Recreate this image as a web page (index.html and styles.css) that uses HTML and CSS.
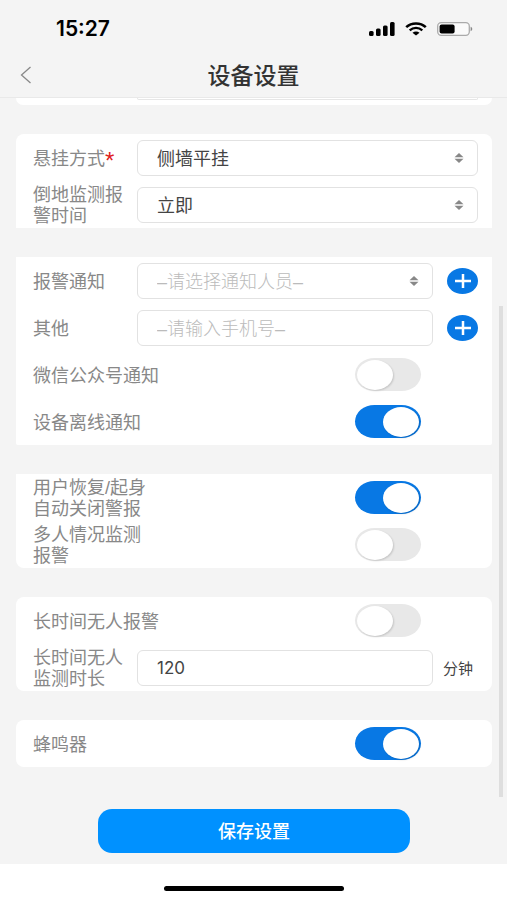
FILE: index.html
```html
<!DOCTYPE html>
<html lang="zh-CN">
<head>
<meta charset="utf-8">
<meta name="viewport" content="width=device-width, initial-scale=1">
<title>设备设置</title>
<link rel="stylesheet" href="styles.css">
</head>
<body>
<header class="top">
  <div class="status">
    <span class="time">15:27</span>
    <div class="status-icons">
      <svg width="26" height="14" viewBox="0 0 26 14" aria-hidden="true">
        <rect x="0" y="9" width="4.6" height="5" rx="1.5"/>
        <rect x="7" y="6.5" width="4.6" height="7.5" rx="1.5"/>
        <rect x="14" y="3.5" width="4.6" height="10.5" rx="1.5"/>
        <rect x="21" y="0" width="4.6" height="14" rx="1.5"/>
      </svg>
      <svg width="22" height="14" viewBox="0 0 22 14" aria-hidden="true">
        <path d="M1.2 5.2C6.6.1 15.4.1 20.8 5.2" fill="none" stroke="#000" stroke-width="2.5"/>
        <path d="M4.7 8.3C8.3 5.1 13.700 5.1 17.3 8.3" fill="none" stroke="#000" stroke-width="2.3"/>
        <path d="M7.5 10.7C9.5 9 12.5 9 14.5 10.7L11 13.6Z"/>
      </svg>
      <svg width="36" height="14" viewBox="0 0 36 14" aria-hidden="true">
        <rect x=".7" y=".7" width="31.6" height="12.6" rx="3.5" fill="#fff" fill-opacity=".5" stroke="#aaa" stroke-width="1.3"/>
        <rect x="2.6" y="2.5" width="15" height="9" rx="2"/>
        <path d="M33.6 4.8C35.8 5.5 35.8 8.5 33.6 9.2Z" fill="#888"/>
      </svg>
    </div>
  </div>
  <div class="nav">
    <button class="back" type="button" aria-label="返回">
      <svg width="12" height="18" viewBox="0 0 12 18" aria-hidden="true"><path d="M10.5 1L1.5 9L10.5 17" fill="none" stroke="#888" stroke-width="1.3"/></svg>
    </button>
    <h1>设备设置</h1>
  </div>
</header>

<main>
  <form class="settings">
    <section class="card card-cut"><div class="cut-field"></div></section>

    <section class="card flat-bottom">
      <div class="row">
        <label for="mount">悬挂方式<span class="req">*</span></label>
        <div class="field">
          <select id="mount"><option>侧墙平挂</option></select>
          <svg class="arrows" viewBox="0 0 10 10" aria-hidden="true"><path d="M5 0L9.5 4.2H.5Z"/><path d="M.5 5.8H9.5L5 10Z"/></svg>
        </div>
      </div>
      <div class="row">
        <label for="fall">倒地监测报警时间</label>
        <div class="field">
          <select id="fall"><option>立即</option></select>
          <svg class="arrows" viewBox="0 0 10 10" aria-hidden="true"><path d="M5 0L9.5 4.2H.5Z"/><path d="M.5 5.8H9.5L5 10Z"/></svg>
        </div>
      </div>
    </section>

    <section class="card flat">
      <div class="row">
        <label for="notify">报警通知</label>
        <div class="field">
          <select id="notify" class="empty"><option>–请选择通知人员–</option></select>
          <svg class="arrows" viewBox="0 0 10 10" aria-hidden="true"><path d="M5 0L9.5 4.2H.5Z"/><path d="M.5 5.8H9.5L5 10Z"/></svg>
        </div>
        <div class="side">
          <button class="add" type="button" aria-label="添加通知人员"><svg width="16" height="14" viewBox="0 0 16 14" aria-hidden="true"><path d="M0 7H16M8 0V14" stroke="#fff" stroke-width="2.5"/></svg></button>
        </div>
      </div>
      <div class="row">
        <label for="other">其他</label>
        <div class="field"><input id="other" class="text" type="tel" placeholder="–请输入手机号–"></div>
        <div class="side">
          <button class="add" type="button" aria-label="添加手机号"><svg width="16" height="14" viewBox="0 0 16 14" aria-hidden="true"><path d="M0 7H16M8 0V14" stroke="#fff" stroke-width="2.5"/></svg></button>
        </div>
      </div>
      <div class="row switch-row">
        <label for="wechat">微信公众号通知</label>
        <input id="wechat" class="switch" type="checkbox">
      </div>
      <div class="row switch-row">
        <label for="offline">设备离线通知</label>
        <input id="offline" class="switch" type="checkbox" checked>
      </div>
    </section>

    <section class="card flat-top">
      <div class="row switch-row">
        <label for="recover">用户恢复/起身<br>自动关闭警报</label>
        <input id="recover" class="switch" type="checkbox" checked>
      </div>
      <div class="row switch-row">
        <label for="multi">多人情况监测<br>报警</label>
        <input id="multi" class="switch" type="checkbox">
      </div>
    </section>

    <section class="card">
      <div class="row switch-row">
        <label for="absent">长时间无人报警</label>
        <input id="absent" class="switch" type="checkbox">
      </div>
      <div class="row">
        <label for="duration">长时间无人监测时长</label>
        <div class="field"><input id="duration" class="text number" type="text" inputmode="numeric" value="120"></div>
        <div class="side unit">分钟</div>
      </div>
    </section>

    <section class="card">
      <div class="row switch-row">
        <label for="buzzer">蜂鸣器</label>
        <input id="buzzer" class="switch" type="checkbox" checked>
      </div>
    </section>

    <button class="save" type="submit">保存设置</button>
  </form>
  <div class="scrollbar"></div>
</main>

<footer class="home"><div class="home-bar"></div></footer>
</body>
</html>
```

FILE: styles.css
```css
* {
  box-sizing: border-box;
}

body {
  margin: 0;
  min-height: 100vh;
  display: flex;
  flex-direction: column;
  background: #f4f4f4;
  color: #444;
  font: 18px/21px "Liberation Sans", "Noto Sans CJK SC", sans-serif;
}

button,
input,
select {
  font: inherit;
  color: inherit;
  margin: 0;
}

button {
  border: 0;
  padding: 0;
}

.top {
  border-bottom: 1px solid #e9e9e9;
}

.status {
  display: flex;
  justify-content: space-between;
  align-items: center;
  height: 52px;
  padding: 5px 34px 0 56px;
}

.time {
  font: 600 21px/24px Inter, sans-serif;
  color: #000;
}

.status-icons {
  display: flex;
  gap: 10px;
}

.nav {
  display: grid;
  grid-template-columns: 52px 1fr 52px;
  align-items: center;
  height: 45px;
}

.back {
  display: flex;
  padding-left: 20px;
  background: none;
}

h1 {
  margin: 0;
  padding-top: 2px;
  text-align: center;
  font-size: 23px;
  line-height: 28px;
  font-weight: 500;
  color: #333;
}

main {
  position: relative;
  flex: 1;
}

.settings {
  display: flex;
  flex-direction: column;
  gap: 29px;
  padding: 0 15px 10px 16px;
}

.card {
  background: #fff;
  border-radius: 8px;
}

.flat-bottom {
  border-radius: 8px 8px 0 0;
}

.flat {
  border-radius: 0 0 2px 2px;
}

.flat-top {
  border-radius: 0 0 8px 8px;
}

.card-cut {
  height: 7px;
  padding: 0 14px 0 121px;
  border-radius: 0 0 8px 8px;
}

.cut-field {
  height: 2px;
  border: 1px solid #e6e6e6;
  border-top: 0;
  border-radius: 0 0 6px 6px;
}

.row {
  display: flex;
  align-items: center;
  height: 47px;
  padding: 0 14px 0 17px;
}

.row label {
  flex: 0 0 104px;
  padding: 3px 12px 0 0;
  color: #888;
}

.row.switch-row {
  justify-content: space-between;
  padding-right: 71px;
}

.switch-row label {
  flex: 0 1 auto;
}

.req {
  color: #e02020;
  font-size: 24px;
  line-height: 18px;
  vertical-align: -4px;
}

.field {
  position: relative;
  flex: 1;
  min-width: 0;
}

.field select,
.text {
  appearance: none;
  display: block;
  width: 100%;
  height: 36px;
  padding: 3px 19px 0;
  border: 1px solid #e2e2e2;
  border-radius: 6px;
  background: #fff;
  outline: 0;
}

.field select.empty,
.text::placeholder {
  color: #bbb;
  font-weight: 300;
  opacity: 1;
}

.text.number {
  padding-top: 0;
  font: 17px/20px Inter, sans-serif;
}

.arrows {
  position: absolute;
  top: 13px;
  right: 14px;
  width: 10px;
  height: 10px;
  fill: #888;
  pointer-events: none;
}

.side {
  flex: 0 0 45px;
  display: flex;
  justify-content: flex-end;
}

.unit {
  padding: 2px 5px 0 0;
  font-size: 15px;
}

.add {
  display: grid;
  place-items: center;
  width: 31px;
  height: 26px;
  border-radius: 50%;
  background: #0878e4;
}

.switch {
  appearance: none;
  display: flex;
  align-items: center;
  width: 66px;
  height: 33px;
  padding: 0 2px;
  border-radius: 20px / 17px;
  background: #e8e8e8;
}

.switch::before {
  content: "";
  width: 36px;
  height: 30px;
  border-radius: 50%;
  background: #fff;
  box-shadow: 1px 1px 2px rgba(0, 0, 0, 0.15);
}

.switch:checked {
  justify-content: flex-end;
  background: #0878e4;
}

.save {
  align-self: center;
  width: 66%;
  max-width: 312px;
  height: 44px;
  margin-top: 13px;
  padding-top: 2px;
  border-radius: 14px;
  background: #0091ff;
  color: #fff;
  font-weight: 500;
}

.scrollbar {
  position: absolute;
  top: 208px;
  right: 4px;
  bottom: 67px;
  width: 4px;
  background: #dedede;
}

.home {
  display: flex;
  justify-content: center;
  align-items: flex-end;
  height: 36px;
  padding-bottom: 9px;
  background: #fff;
}

.home-bar {
  width: 180px;
  height: 5px;
  border-radius: 3px;
  background: #000;
}
```
